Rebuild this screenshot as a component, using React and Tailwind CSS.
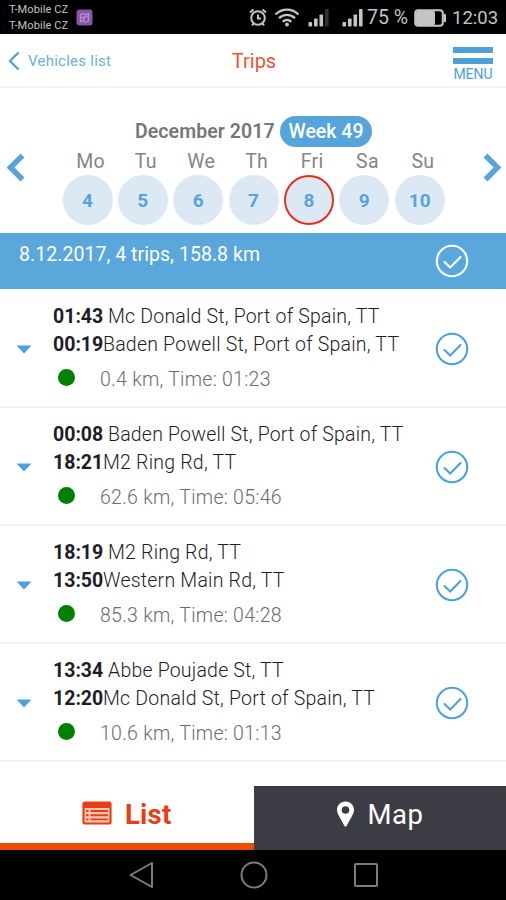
const days = [
  ["Mo", 4],
  ["Tu", 5],
  ["We", 6],
  ["Th", 7],
  ["Fri", 8],
  ["Sa", 9],
  ["Su", 10],
];

const trips = [
  { end: "01:43", to: "Mc Donald St, Port of Spain, TT", start: "00:19", from: "Baden Powell St, Port of Spain, TT", info: "0.4 km, Time: 01:23" },
  { end: "00:08", to: "Baden Powell St, Port of Spain, TT", start: "18:21", from: "M2 Ring Rd, TT", info: "62.6 km, Time: 05:46" },
  { end: "18:19", to: "M2 Ring Rd, TT", start: "13:50", from: "Western Main Rd, TT", info: "85.3 km, Time: 04:28" },
  { end: "13:34", to: "Abbe Poujade St, TT", start: "12:20", from: "Mc Donald St, Port of Spain, TT", info: "10.6 km, Time: 01:13" },
];

function CheckCircle({ className }) {
  return (
    <svg className={className} width="34" height="34" viewBox="0 0 34 34" fill="none" stroke="currentColor" strokeWidth="2.1">
      <circle cx="17" cy="17" r="15.2" />
      <path d="M9.500 18l5.700 5.500 10.300-10.500" strokeLinecap="round" />
    </svg>
  );
}

function Signal({ weak }) {
  return (
    <svg width="22" height="19" viewBox="0 0 22 19" fill="#c4c4c4">
      <rect x="0.5" y="14" width="3.6" height="4.5" rx="0.8" />
      <rect x="6" y="10.5" width="3.6" height="8" rx="0.8" />
      <rect x="11.5" y="6.5" width="3.6" height="12" rx="0.8" />
      <rect x="17" y="1" width="3.6" height="17.5" rx="0.8" fill={weak ? "#333" : "#c4c4c4"} />
    </svg>
  );
}

function StatusBar() {
  return (
    <div className="flex h-[34px] shrink-0 items-center bg-black text-[#c4c4c4]">
      <div className="ml-[9px] mt-px w-[61px] text-[11px] leading-[16px] tracking-[0.100px] whitespace-nowrap">
        <div>T-Mobile CZ</div>
        <div>T-Mobile CZ</div>
      </div>
      <svg className="ml-[6px]" width="17" height="17" viewBox="0 0 17 17">
        <rect x="0.5" y="0.5" width="16" height="16" rx="3" fill="#8655ac" />
        <path d="M4.5 5.5l2.5-1 2.5 1 3-1v7.500l-3 .8-2.500-1-2.500 1zM5 8.500l7-1M6 12l5-6" fill="none" stroke="#b58fce" strokeWidth="1.200" />
      </svg>
      <svg className="ml-[156px]" width="18" height="19" viewBox="0 0 18 19" fill="none" stroke="#c4c4c4" strokeWidth="2">
        <circle cx="9" cy="10" r="6.8" />
        <path d="M9 6.500V10.500h3M1 4.500l3.500-3M17 4.500l-3.500-3M4.500 15.500l-1.500 2M13.500 15.500l1.500 2" />
      </svg>
      <svg className="ml-[7px]" width="26" height="20" viewBox="0 0 26 20" fill="none" stroke="#c4c4c4" strokeWidth="2.400">
        <path d="M1.500 7.500C8 1 18 1 24.500 7.500M5 11.200c4.500-4.500 11.500-4.500 16 0M8.800 14.800c2.400-2.400 6-2.400 8.400 0" />
        <circle cx="13" cy="17.500" r="1.900" fill="#c4c4c4" stroke="none" />
      </svg>
      <div className="ml-[8px] flex"><Signal weak /></div>
      <div className="ml-[12px] flex"><Signal /></div>
      <div className="ml-[3px] mt-[2px] w-[43px] text-[19.500px] whitespace-nowrap">75 %</div>
      <svg className="ml-[4px] mt-[2px]" width="33" height="18" viewBox="0 0 33 18">
        <rect x="1.200" y="1.200" width="27.600" height="15.600" rx="3" fill="none" stroke="#c4c4c4" strokeWidth="2" />
        <rect x="2" y="2" width="19" height="14" rx="1.500" fill="#c4c4c4" />
        <rect x="29.500" y="5" width="2.500" height="8" rx="0.800" fill="#c4c4c4" />
      </svg>
      <div className="ml-[5px] mt-[3px] text-[18.500px] whitespace-nowrap">12:03</div>
    </div>
  );
}

function Header() {
  return (
    <header className="flex h-[54px] shrink-0 items-start border-b-2 border-[#f5f5f5] text-[#4da1d8]">
      <div className="flex w-[200px] items-center pt-[17px] pl-[8px]">
        <svg width="12" height="20" viewBox="0 0 12 20" fill="none" stroke="currentColor" strokeWidth="2.300">
          <path d="M10.500 1.500L2 10l8.500 8.500" />
        </svg>
        <span className="ml-[8px] text-[15px] leading-[20px] tracking-[0.250px] text-[#6cb0de]">Vehicles list</span>
      </div>
      <h1 className="w-[108px] pt-[15px] text-center text-[20px] leading-[24px] text-[#ee5530]">Trips</h1>
      <div className="ml-auto mr-[13px] flex w-[40px] flex-col items-center pt-[13px]">
        <div className="h-[6px] w-[40px] bg-[#4da1d8]" />
        <div className="mt-[5px] h-[6px] w-[40px] bg-[#4da1d8]" />
        <span className="mt-[2px] text-[14px] leading-[16px] whitespace-nowrap">MENU</span>
      </div>
    </header>
  );
}

function WeekPicker() {
  return (
    <section className="flex h-[145px] shrink-0 justify-between">
      <svg className="mt-[65px] ml-[6px]" width="19" height="29" viewBox="0 0 19 29" fill="none" stroke="#55a5dc" strokeWidth="5.500">
        <path d="M16.500 2.500L4.500 14.500l12 12" />
      </svg>
      <div className="w-[390px] pt-[28px]">
        <div className="flex items-center pl-[76px]">
          <span className="w-[140px] pt-px text-[19.500px] font-semibold tracking-[0.080px] whitespace-nowrap text-[#777]">December 2017</span>
          <span className="ml-[5px] h-[31px] w-[92px] rounded-full bg-[#55a5dc] text-center text-[19.500px] leading-[31px] font-medium whitespace-nowrap text-white">Week 49</span>
        </div>
        <div className="mt-[2px] flex gap-[5.400px] pl-[3.500px]">
          {days.map(([name, date]) => (
            <div key={name} className="flex w-[50px] flex-col items-center">
              <span className="pt-px pl-[6px] text-[19.500px] leading-[24px] tracking-[0.300px] text-[#858585]">{name}</span>
              <span
                className={`mt-px h-[50px] w-[50px] rounded-full border-[2.500px] bg-[#dce9f5] text-center text-[19px] leading-[47px] font-bold tracking-[0.300px] text-[#55a5dc] ${
                  date === 8 ? "border-[#e62e1a]" : "border-[#dce9f5]"
                }`}
              >
                {date}
              </span>
            </div>
          ))}
        </div>
      </div>
      <svg className="mt-[65px] mr-[4px]" width="19" height="29" viewBox="0 0 19 29" fill="none" stroke="#55a5dc" strokeWidth="5.500">
        <path d="M2.500 2.500l12 12-12 12" />
      </svg>
    </section>
  );
}

function Trip({ trip }) {
  return (
    <li className="flex h-[118px] shrink-0 border-b-2 border-[#f1f1f1] text-[19.500px] leading-[28px] whitespace-nowrap text-[#1d1d29]">
      <svg className="mt-[55px] ml-[16px]" width="16" height="9" viewBox="0 0 16 9" fill="#4da1d8">
        <path d="M0.500 0.500h15L8 8.500z" />
      </svg>
      <div className="ml-[21px] w-[382px] pt-[13px]">
        <div className="flex">
          <b className="w-[55px] font-bold">{trip.end}</b>
          <span className="font-light tracking-[0.200px]">{trip.to}</span>
        </div>
        <div className="flex">
          <b className="w-[50px] font-bold">{trip.start}</b>
          <span className="font-light tracking-[0.220px]">{trip.from}</span>
        </div>
        <div className="mt-[7px] flex items-center">
          <span className="-mt-[6px] ml-[5px] h-[17px] w-[17px] rounded-full bg-[#008000]" />
          <span className="ml-[25px] font-light tracking-[0.270px] text-[#6c6c6c]">{trip.info}</span>
        </div>
      </div>
      <CheckCircle className="mt-[42px] text-[#4da1d8]" />
    </li>
  );
}

export default function App() {
  return (
    <div className="flex h-[900px] w-[506px] flex-col overflow-hidden bg-white font-[Roboto,'Liberation_Sans',sans-serif]">
      <StatusBar />
      <Header />
      <WeekPicker />
      <div className="flex h-[56px] shrink-0 bg-[#5aa7dc] pl-[19px] text-white">
        <span className="w-[416px] pt-[9px] text-[19.500px] leading-[26px] tracking-[0.050px]">8.12.2017, 4 trips, 158.8 km</span>
        <CheckCircle className="mt-[11px]" />
      </div>
      <ul className="mt-px flex flex-col">
        {trips.map((trip) => (
          <Trip key={trip.end} trip={trip} />
        ))}
      </ul>
      <nav className="mt-auto flex h-[64px] shrink-0">
        <div className="flex w-[254px] border-b-[7px] border-[#f04c00] pt-[15px] pl-[82px] text-[#e93e12]">
          <svg width="30" height="24" viewBox="0 0 30 24">
            <rect x="1.500" y="1.500" width="27" height="21" rx="1.500" fill="#f9c9b8" stroke="currentColor" strokeWidth="2.200" />
            <rect x="1" y="1" width="28" height="6" rx="1" fill="currentColor" />
            <path d="M4 10h2.500M8.500 10H26M4 14.200h2.500M8.500 14.200H26M4 18.400h2.500M8.500 18.400H26" stroke="currentColor" strokeWidth="1.900" />
          </svg>
          <span className="ml-[13px] text-[27.500px] leading-[28px] font-bold tracking-[0.200px]">List</span>
        </div>
        <div className="flex flex-1 bg-[#3c3c45] pt-[15px] pl-[82px] text-white">
          <svg width="19" height="27" viewBox="0 0 19 27" fill="currentColor">
            <path fillRule="evenodd" d="M9.500 0.500C4.500 0.500 1 4.300 1 8.800c0 2.200.8 3.800 1.600 5.400L8.500 25c.5.900 1.500.9 2 0l5.900-10.800c.8-1.600 1.600-3.200 1.600-5.400C18 4.300 14.500.5 9.500.5zm0 4.700a3.800 3.800 0 1 1 0 7.600 3.800 3.800 0 0 1 0-7.600z" />
          </svg>
          <span className="ml-[12.500px] text-[27.500px] leading-[28px] font-normal tracking-[0.500px]">Map</span>
        </div>
      </nav>
      <div className="flex h-[50px] shrink-0 items-start bg-black pt-[11px]">
        <svg className="ml-[128px]" width="27" height="28" viewBox="0 0 27 28" fill="none" stroke="#7d7d7d" strokeWidth="2" strokeLinejoin="round">
          <path d="M24 2v24L2.500 14z" />
        </svg>
        <svg className="ml-[85px]" width="28" height="28" viewBox="0 0 28 28" fill="none" stroke="#7d7d7d" strokeWidth="2">
          <circle cx="14" cy="14" r="12.500" />
        </svg>
        <svg className="ml-[84px]" width="28" height="28" viewBox="0 0 28 28" fill="none" stroke="#7d7d7d" strokeWidth="2">
          <rect x="3" y="3" width="22" height="22" rx="1" />
        </svg>
      </div>
    </div>
  );
}
